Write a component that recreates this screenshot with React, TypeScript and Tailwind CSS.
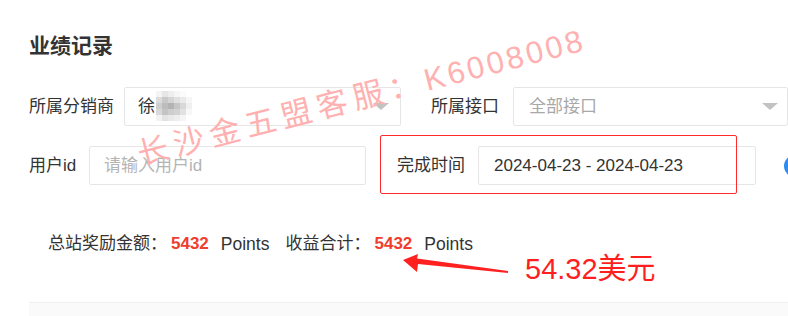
import React from "react";

const FONT = { fontFamily: '"Liberation Sans", "Noto Sans CJK SC", sans-serif' };

const mosaic = [
  ["#f4f4f4", "#e6e6e6", "#eeeeee", "#f6f6f6", "#fbfbfb", "#ffffff"],
  ["#dcdcdc", "#c9c9c9", "#d4d4d4", "#e0e0e0", "#eaeaea", "#f6f6f6"],
  ["#cfcfcf", "#bdbdbd", "#b3b3b3", "#c6c6c6", "#d8d8d8", "#f0f0f0"],
  ["#d9d9d9", "#c4c4c4", "#cdcdcd", "#d2d2d2", "#e2e2e2", "#f7f7f7"],
  ["#f2f2f2", "#e3e3e3", "#e9e9e9", "#eeeeee", "#f5f5f5", "#ffffff"],
];

function Caret() {
  return <span className="w-0 h-0 border-l-[8px] border-r-[8px] border-t-[7px] border-l-transparent border-r-transparent border-t-[#c2c2c2]" />;
}

export default function App() {
  return (
    <div className="relative w-[788px] h-[316px] overflow-hidden bg-white text-[#333]" style={FONT}>
      <div className="pl-[29px] pt-[32px]">
        <h1 className="text-[21px] leading-[28px] font-bold text-[#333]">业绩记录</h1>

        {/* row 1 */}
        <div className="flex items-center mt-[27px] h-[39px] text-[17px] whitespace-nowrap">
          <span className="w-[99px]">所属分销商</span>
          <div className="w-[277px] h-[39px] shrink-0 border border-[#e6e6e6] rounded-[2px] flex items-center justify-between pl-[13px] pr-[11px]">
            <div className="flex items-center">
              <span>徐</span>
              <div className="grid grid-cols-6 ml-[1px] -mt-[2px]">
                {mosaic.flat().map((c, i) => (
                  <span key={i} className="w-[6px] h-[6px]" style={{ backgroundColor: c }} />
                ))}
              </div>
            </div>
            <Caret />
          </div>
          <span className="ml-[30px] w-[82px] shrink-0">所属接口</span>
          <div className="w-[275px] h-[39px] shrink-0 border border-[#e6e6e6] rounded-[2px] flex items-center justify-between pl-[15px] pr-[9px]">
            <span className="text-[#a8a8a8]">全部接口</span>
            <Caret />
          </div>
        </div>

        {/* row 2 */}
        <div className="flex items-center mt-[20px] h-[39px] text-[17px] whitespace-nowrap">
          <span className="w-[60px] shrink-0">用户id</span>
          <div className="w-[277px] h-[39px] shrink-0 border border-[#e6e6e6] rounded-[2px] flex items-center pl-[14px]">
            <span className="text-[#b4b4b4]">请输入用户id</span>
          </div>
          <span className="ml-[31px] w-[81px] shrink-0">完成时间</span>
          <div className="w-[278px] h-[39px] shrink-0 border border-[#e6e6e6] rounded-[2px] flex items-center pl-[15px]">
            <span className="text-[#333]">2024-04-23 - 2024-04-23</span>
          </div>
          <div className="ml-[28px] w-[40px] h-[22px] shrink-0 rounded-full bg-[#2d8cf0]" />
        </div>

        {/* totals */}
        <div className="flex items-center mt-[47px] pl-[19px] h-[24px] text-[17px] whitespace-nowrap">
          <span>总站奖励金额：</span>
          <span className="ml-[4px] font-bold text-[#f03d2e]">5432</span>
          <span className="ml-[12px] text-[17.5px]">Points</span>
          <span className="ml-[16px]">收益合计：</span>
          <span className="ml-[4px] font-bold text-[#f03d2e]">5432</span>
          <span className="ml-[12px] text-[17.5px]">Points</span>
        </div>

        <div className="mt-[46px] h-[20px] border-t border-[#efefef] bg-[#fafafa]" />
      </div>

      {/* annotations */}
      <div className="absolute left-[380px] top-[135px] w-[357px] h-[59px] border-[1.5px] border-[#ff2b2b] rounded-[2px]" />
      <svg className="absolute left-[400px] top-[250px]" width="112" height="26" viewBox="0 0 112 26">
        <polygon points="3,10 18,4 17,8.5 108,21 108,23 18,14 17,22" fill="#ff2020" />
      </svg>
      <span className="absolute left-[525px] top-[252px] text-[29px] leading-[34px] text-[#ff1f1f]">54.32美元</span>

      {/* watermark */}
      <span
        className="absolute left-[142px] top-[140px] origin-bottom-left -rotate-[14.5deg] text-[31px] leading-[30px] text-[#ffb0b0] whitespace-nowrap pointer-events-none"
      >
        <span className="tracking-[6px]">长沙金五盟客服：</span>
        <span className="tracking-[3px]">K6008008</span>
      </span>
    </div>
  );
}
